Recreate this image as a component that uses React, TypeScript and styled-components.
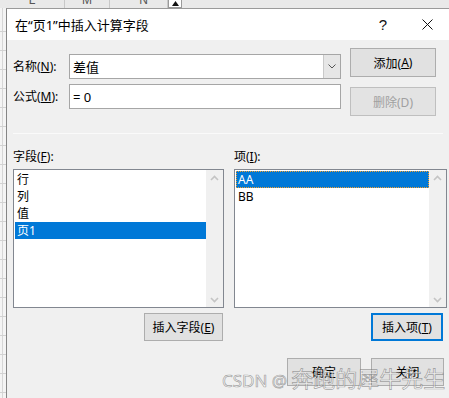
import React from "react";
import styled, { createGlobalStyle } from "styled-components";

const Global = createGlobalStyle`
  html, body { margin: 0; padding: 0; background: #fff; overflow: hidden; }
  * { box-sizing: border-box; }
`;

const FONT = `"Noto Sans", "Noto Sans CJK SC", sans-serif`;

const Root = styled.div`
  position: relative;
  width: 449px;
  height: 398px;
  overflow: hidden;
  display: grid;
  grid-template-rows: 8px 1fr;
  grid-template-columns: 6px 1fr;
  font-family: ${FONT};
  font-size: 12px;
  color: #000;
`;

const ColumnHeaders = styled.div`
  grid-column: 1 / -1;
  display: flex;
  background: #e9e9e9;
  overflow: hidden;
  height: 8px;
`;

const HeaderCell = styled.div<{ $w: number; $shift?: number }>`
  width: ${(p) => p.$w}px;
  flex: none;
  display: flex;
  align-items: flex-end;
  justify-content: center;
  padding-left: ${(p) => p.$shift ?? 0}px;
  border-right: 1px solid #c8c8c8;
  color: #555;
  font-family: "Liberation Sans", sans-serif;
  font-size: 12px;
  & > span { display: block; line-height: 12px; margin-bottom: 2px; }
`;

const ScrollUpBox = styled.div`
  width: 14px;
  height: 8px;
  flex: none;
  background: #fff;
  border: 1px solid #9a9a9a;
  border-top: none;
  display: flex;
  align-items: center;
  justify-content: center;
`;

const SheetEdge = styled.div`
  background-color: #f4f4f4;
  background-image:
    repeating-linear-gradient(to bottom, transparent 0 18px, #d2d2d2 18px 19px),
    linear-gradient(to right, transparent 0 2px, #d6d6d6 2px 3px, transparent 3px);
  background-position: 0 5px, 0 0;
`;

const Dialog = styled.div`
  display: flex;
  flex-direction: column;
  background: #f0f0f0;
  border-left: 1px solid #858585;
  border-top: 1px solid #9a9a9a;
`;

const TitleBar = styled.div`
  height: 31px;
  flex: none;
  background: #fff;
  display: flex;
  align-items: center;
  padding-left: 8px;
`;

const Title = styled.div`
  flex: 1;
  font-family: "Noto Sans", "Noto Sans CJK SC", sans-serif;
  font-size: 13px;
  color: #000;
`;

const TitleButton = styled.div`
  width: 44px;
  height: 31px;
  display: flex;
  align-items: center;
  justify-content: center;
  font-family: "Liberation Sans", sans-serif;
  font-size: 15px;
  color: #111;
`;

const Body = styled.div`
  flex: 1;
  display: flex;
  flex-direction: column;
  padding: 8px 0 0 6px;
`;

const TopSection = styled.div`
  display: flex;
  align-items: flex-start;
`;

const FormGrid = styled.div`
  margin-top: 6px;
  display: grid;
  grid-template-columns: 56px 272px;
  row-gap: 5px;
  align-items: center;
`;

const Label = styled.div`
  font-size: 12px;
  line-height: 16px;
  white-space: nowrap;
`;

const TextBox = styled.div`
  height: 25px;
  border: 1px solid #a6a6a6;
  background: #fff;
  display: flex;
  align-items: center;
  padding-left: 3px;
  font-size: 13px;
`;

const ComboText = styled.div`
  flex: 1;
`;

const DropButton = styled.div`
  width: 17px;
  height: 23px;
  background: #e6e6e6;
  border-left: 1px solid #c9c9c9;
  display: flex;
  align-items: center;
  justify-content: center;
`;

const ButtonColumn = styled.div`
  margin-left: 9px;
  display: flex;
  flex-direction: column;
  gap: 10px;
`;

const Button = styled.div<{ $w: number; $h?: number; $disabled?: boolean; $default?: boolean }>`
  width: ${(p) => p.$w}px;
  height: ${(p) => p.$h ?? 28}px;
  flex: none;
  background: ${(p) => (p.$disabled ? "#e3e3e3" : "#e1e1e1")};
  border: ${(p) =>
    p.$default ? "2px solid #0078d7" : p.$disabled ? "1px solid #bfbfbf" : "1px solid #adadad"};
  color: ${(p) => (p.$disabled ? "#a0a0a0" : "#000")};
  display: flex;
  align-items: center;
  justify-content: center;
  font-size: 12px;
  white-space: nowrap;
`;

const Separator = styled.div`
  margin-top: 17px;
  margin-right: 6px;
  height: 1px;
  background: #d9d9d9;
  border-bottom: 1px solid #fafafa;
`;

const ListsSection = styled.div`
  margin-top: 15px;
  display: grid;
  grid-template-columns: 211px 213px;
  column-gap: 10px;
`;

const ListColumn = styled.div<{ $btnRight: number }>`
  display: flex;
  flex-direction: column;
  & > ${Label} { margin-bottom: 4px; }
  & > ${Button} { align-self: flex-end; margin-top: 5px; margin-right: ${(p) => p.$btnRight}px; }
`;

const ListBox = styled.div`
  height: 139px;
  border: 1px solid #828790;
  background: #fff;
  display: flex;
`;

const ListItems = styled.div`
  flex: 1;
  padding: 1px 0 0 1px;
  display: flex;
  flex-direction: column;
`;

const ListItem = styled.div<{ $selected?: boolean; $focus?: boolean }>`
  height: 17px;
  line-height: 17px;
  padding-left: 2px;
  font-size: 12px;
  background: ${(p) => (p.$selected ? "#0078d7" : "transparent")};
  color: ${(p) => (p.$selected ? "#fff" : "#000")};
  outline: ${(p) => (p.$focus ? "1px dotted #f0a030" : "none")};
  outline-offset: -1px;
`;

const ScrollBar = styled.div`
  width: 17px;
  background: #f0f0f0;
  display: flex;
  flex-direction: column;
  justify-content: space-between;
  align-items: center;
  padding: 5px 0 4px;
`;

const BottomRow = styled.div`
  margin-top: 17px;
  margin-right: 5px;
  display: flex;
  justify-content: flex-end;
  gap: 10px;
`;

const Watermark = styled.div`
  position: absolute;
  left: 222px;
  top: 362px;
  font-family: "Noto Sans CJK SC", sans-serif;
  font-size: 22px;
  line-height: 30px;
  white-space: nowrap;
  color: rgba(255, 255, 255, 0.55);
  -webkit-text-stroke: 0.7px rgba(90, 90, 90, 0.55);
  pointer-events: none;
  & > span { font-family: "Noto Sans", sans-serif; font-size: 17px; margin-right: 4px; }
`;

const Chevron = ({ up, color }: { up?: boolean; color: string }) => (
  <svg width="9" height="6" viewBox="0 0 9 6">
    <path
      d={up ? "M1 5 L4.5 1.5 L8 5" : "M1 1 L4.5 4.5 L8 1"}
      fill="none"
      stroke={color}
      strokeWidth="1.6"
    />
  </svg>
);

const SmallChevron = () => (
  <svg width="8" height="5" viewBox="0 0 8 5">
    <path d="M0.5 0.5 L4 4 L7.5 0.5" fill="none" stroke="#555" strokeWidth="1" />
  </svg>
);

const CloseGlyph = () => (
  <svg width="11" height="11" viewBox="0 0 11 11">
    <path d="M0.5 0.5 L10.5 10.5 M10.5 0.5 L0.5 10.5" stroke="#111" strokeWidth="1" />
  </svg>
);

const UpTriangle = () => (
  <svg width="7" height="5" viewBox="0 0 7 5">
    <path d="M0 5 L3.5 0 L7 5 Z" fill="#111" />
  </svg>
);

const Scroll = () => (
  <ScrollBar>
    <Chevron up color="#c4c4c4" />
    <Chevron color="#c4c4c4" />
  </ScrollBar>
);

export default function App() {
  return (
    <>
      <Global />
      <Root>
        <ColumnHeaders>
          <HeaderCell $w={65}><span>L</span></HeaderCell>
          <HeaderCell $w={45}><span>M</span></HeaderCell>
          <HeaderCell $w={58} $shift={10}><span>N</span></HeaderCell>
          <ScrollUpBox><UpTriangle /></ScrollUpBox>
        </ColumnHeaders>
        <SheetEdge />
        <Dialog>
          <TitleBar>
            <Title>在“页1”中插入计算字段</Title>
            <TitleButton>?</TitleButton>
            <TitleButton><CloseGlyph /></TitleButton>
          </TitleBar>
          <Body>
            <TopSection>
              <FormGrid>
                <Label>名称(<u>N</u>):</Label>
                <TextBox>
                  <ComboText>差值</ComboText>
                  <DropButton><SmallChevron /></DropButton>
                </TextBox>
                <Label>公式(<u>M</u>):</Label>
                <TextBox>= 0</TextBox>
              </FormGrid>
              <ButtonColumn>
                <Button $w={86} $h={29}>添加(<u>A</u>)</Button>
                <Button $w={86} $h={29} $disabled>删除(D)</Button>
              </ButtonColumn>
            </TopSection>
            <Separator />
            <ListsSection>
              <ListColumn $btnRight={1}>
                <Label>字段(<u>F</u>):</Label>
                <ListBox>
                  <ListItems>
                    <ListItem>行</ListItem>
                    <ListItem>列</ListItem>
                    <ListItem>值</ListItem>
                    <ListItem $selected>页1</ListItem>
                  </ListItems>
                  <Scroll />
                </ListBox>
                <Button $w={79}>插入字段(<u>E</u>)</Button>
              </ListColumn>
              <ListColumn $btnRight={4}>
                <Label>项(<u>I</u>):</Label>
                <ListBox>
                  <ListItems>
                    <ListItem $selected $focus>AA</ListItem>
                    <ListItem>BB</ListItem>
                  </ListItems>
                  <Scroll />
                </ListBox>
                <Button $w={72} $default>插入项(<u>T</u>)</Button>
              </ListColumn>
            </ListsSection>
            <BottomRow>
              <Button $w={74}>确定</Button>
              <Button $w={73}>关闭</Button>
            </BottomRow>
          </Body>
        </Dialog>
        <Watermark><span>CSDN @</span>奔跑的犀牛先生</Watermark>
      </Root>
    </>
  );
}
